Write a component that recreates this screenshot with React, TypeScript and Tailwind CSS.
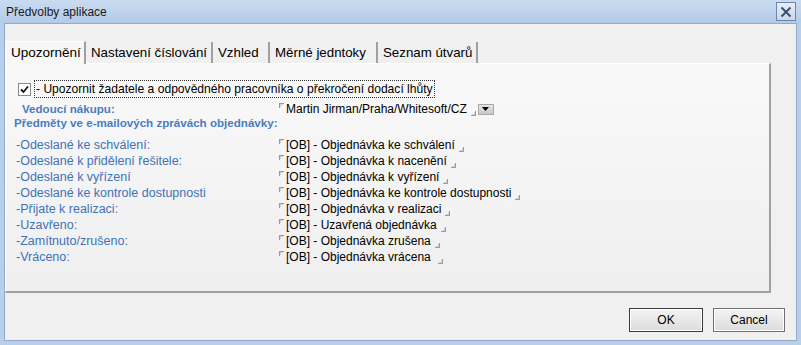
import React from "react";

const rows: [string, string][] = [
  ["-Odeslané ke schválení:", "[OB] - Objednávka ke schválení"],
  ["-Odeslané k přidělení řešitele:", "[OB] - Objednávka k nacenění"],
  ["-Odeslané k vyřízení", "[OB] - Objednávka k vyřízení"],
  ["-Odeslané ke kontrole dostupnosti", "[OB] - Objednávka ke kontrole dostupnosti"],
  ["-Přijate k realizaci:", "[OB] - Objednávka v realizaci"],
  ["-Uzavřeno:", "[OB] - Uzavřená objednávka"],
  ["-Zamítnuto/zrušeno:", "[OB] - Objednávka zrušena"],
  ["-Vráceno:", "[OB] - Objednávka vrácena "],
];

function StartMark() {
  return (
    <span className="relative inline-block w-[7px] h-[14px] shrink-0">
      <span className="absolute left-0 top-[1px] w-[5px] h-[5px] border-t border-l border-[#9a9a9a]" />
      <span className="absolute left-[1px] top-[2px] w-[3px] h-[3px] border-t border-l border-[#d0d0d0]" />
    </span>
  );
}

function EndMark() {
  return (
    <span className="relative inline-block w-[8px] h-[14px] shrink-0 ml-[2px]">
      <span className="absolute right-[1px] bottom-0 w-[5px] h-[5px] border-b border-r border-[#9a9a9a]" />
      <span className="absolute right-[2px] bottom-[1px] w-[3px] h-[3px] border-b border-r border-[#d0d0d0]" />
    </span>
  );
}

function Value({ text }: { text: string }) {
  return (
    <div className="flex items-center h-[16px] text-[12px] text-black whitespace-pre">
      <StartMark />
      <span>{text}</span>
      <EndMark />
    </div>
  );
}

const tabs: { label: string; w: string }[] = [
  { label: "Nastavení číslování", w: "w-[127px]" },
  { label: "Vzhled", w: "w-[57px]" },
  { label: "Měrné jedntoky", w: "w-[108px]" },
  { label: "Seznam útvarů", w: "w-[100px]" },
];

export default function App() {
  return (
    <div className="w-[801px] h-[345px] bg-[#b7cfea] flex flex-col px-[4px] pb-[4px] font-['Liberation_Sans',Arial,sans-serif] overflow-hidden">
      {/* Title bar */}
      <div className="h-[23px] shrink-0 flex items-center justify-between bg-gradient-to-b from-[#c9dbf0] to-[#b3cbe8] -mx-[4px] px-[6px]">
        <span className="text-[12px] text-[#1a1a1a] pt-[1px]">Předvolby aplikace</span>
        <div className="w-[20px] h-[19px] border border-[#6f86a6] bg-gradient-to-b from-[#e7eef8] to-[#c9d7ea] flex items-center justify-center mr-[-1px]">
          <svg width="12" height="12" viewBox="0 0 12 12">
            <path d="M1.5 1.5 L10.5 10.5 M10.5 1.5 L1.5 10.5" stroke="#3d4f66" strokeWidth="2" />
          </svg>
        </div>
      </div>
      {/* Body */}
      <div className="flex-1 bg-[#f0f0f0] border border-[#93aacb] flex flex-col">
        {/* Tabs */}
        <div className="flex items-end h-[39px] pl-0">
          <div className="w-[81px] h-[23px] pl-[5px] flex items-center bg-[#f7f7f7] border-t border-l border-white border-r-[2px] border-r-[#a0a0a0] text-[13.5px] text-black relative z-10 mb-[-1px] whitespace-nowrap">
            Upozornění
          </div>
          {tabs.map((t) => (
            <div
              key={t.label}
              className={`${t.w} h-[21px] pl-[5px] flex items-center border-r-[2px] border-r-[#a0a0a0] text-[13.3px] text-black whitespace-nowrap`}
            >
              {t.label}
            </div>
          ))}
        </div>
        {/* Panel */}
        <div className="ml-0 w-[766px] h-[230px] border-t border-l border-white border-r-[2px] border-b-[2px] border-r-[#a0a0a0] border-b-[#a0a0a0] bg-gradient-to-b from-[#f9f9f9] to-[#efefef] pt-[16px]">
          <div className="flex items-center h-[18px] pl-[12px]">
            <div className="w-[13px] h-[13px] border border-[#8a8a8a] bg-white flex items-center justify-center">
              <svg width="9" height="9" viewBox="0 0 9 9">
                <path d="M1 4.5 L3.5 7 L8 1.5" stroke="#111" strokeWidth="1.8" fill="none" />
              </svg>
            </div>
            <div className="ml-[3px] h-[18px] px-[1px] flex items-center border border-dotted border-[#333] text-[12.1px] text-black whitespace-nowrap">
              - Upozornit žadatele a odpovědného pracovníka o překročení dodací lhůty
            </div>
          </div>
          <div className="flex items-center h-[14px] mt-[4px]">
            <div className="w-[273px] pl-[16px] text-[11.6px] font-bold text-[#4a7dc0]">Vedoucí nákupu:</div>
            <div className="flex items-center h-[14px] text-[12px] text-black">
              <StartMark />
              <span>Martin Jirman/Praha/Whitesoft/CZ</span>
              <EndMark />
              <div className="ml-[1px] w-[16px] h-[11px] bg-gradient-to-b from-[#e6e6e6] to-[#c8c8c8] border border-[#a9a9a9] flex items-center justify-center">
                <svg width="7" height="4" viewBox="0 0 7 4">
                  <path d="M0 0 L7 0 L3.5 4 Z" fill="#000" />
                </svg>
              </div>
            </div>
          </div>
          <div className="h-[14px] flex items-center pl-[8px] text-[11.6px] font-bold text-[#4a7dc0]">
            Předměty ve e-mailových zprávách objednávky:
          </div>
          <div className="mt-[7px] flex flex-col">
            {rows.map(([l, v]) => (
              <div key={l} className="flex items-center h-[16px]">
                <div className="w-[273px] pl-[10px] text-[12.5px] text-[#3f72b8] whitespace-nowrap">{l}</div>
                <Value text={v} />
              </div>
            ))}
          </div>
        </div>
        {/* Buttons */}
        <div className="flex justify-end gap-[10px] pr-[11px] mt-[15px]">
          <div className="w-[74px] h-[24px] border border-[#3c3c3c] bg-gradient-to-b from-[#f4f4f4] to-[#dcdcdc] flex items-center justify-center text-[12px] text-black shadow-[inset_0_0_0_1px_#fff]">
            OK
          </div>
          <div className="w-[72px] h-[24px] border border-[#707070] bg-gradient-to-b from-[#f4f4f4] to-[#dcdcdc] flex items-center justify-center text-[12px] text-black shadow-[inset_0_0_0_1px_#fff]">
            Cancel
          </div>
        </div>
      </div>
    </div>
  );
}
